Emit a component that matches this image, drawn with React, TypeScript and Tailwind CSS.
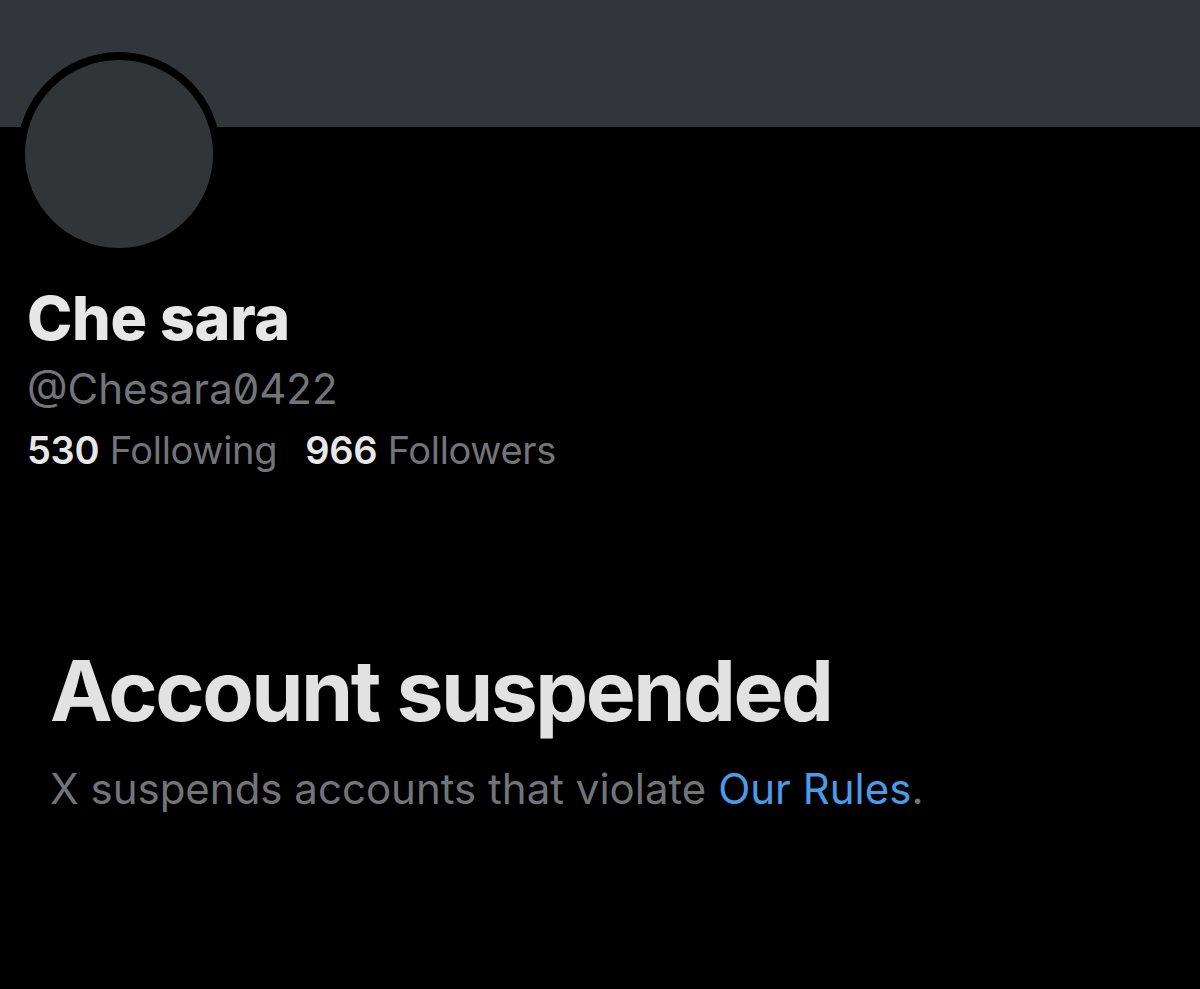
export default function App() {
  return (
    <div className="w-[1200px] h-[989px] bg-black overflow-hidden" style={{ fontFamily: "Inter, 'Noto Sans', sans-serif" }}>
      <div className="h-[127px] bg-[#32353a]" />
      <div className="relative px-[27px]">
        <div className="absolute left-[17px] top-[-75px] w-[204px] h-[204px] rounded-full bg-black flex items-center justify-center">
          <div className="w-[188px] h-[188px] rounded-full bg-[#323538]" />
        </div>
        <div className="pt-[155px]">
          <div className="text-[61px] leading-[72px] font-extrabold text-[#e7e7e7] tracking-[-0.3px]">Che sara</div>
          <div className="mt-[10px] text-[42px] leading-[50px] text-[#717579] [font-feature-settings:'zero']">@Chesara0422</div>
          <div className="mt-[13px] text-[38px] leading-[46px] flex gap-[28px] tracking-[-0.3px]">
            <span><span className="font-semibold text-[#e7e7e7]">530</span><span className="text-[#717579]"> Following</span></span>
            <span><span className="font-semibold text-[#e7e7e7]">966</span><span className="text-[#717579]"> Followers</span></span>
          </div>
        </div>
        <div className="pl-[23px] pt-[170px]">
          <div className="text-[84px] leading-[96px] font-bold text-[#e2e2e2] tracking-[-2.5px]">Account suspended</div>
          <div className="mt-[24px] text-[42px] leading-[52px] text-[#717579]">
            X suspends accounts that violate <span className="text-[#4a9be8]">Our Rules</span>.
          </div>
        </div>
      </div>
    </div>
  );
}
